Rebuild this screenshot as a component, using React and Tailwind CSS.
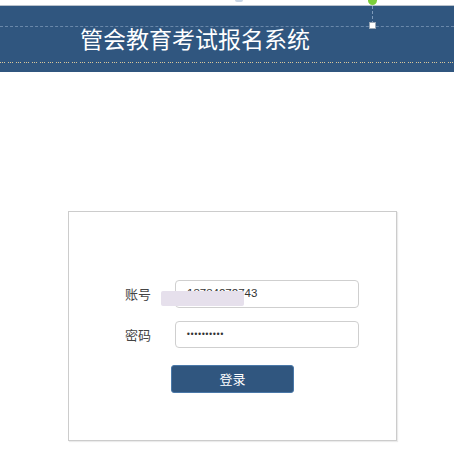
export default function App() {
  const cjk = { fontFamily: '"Noto Sans CJK SC", "Noto Sans", sans-serif' };
  return (
    <div className="relative w-[454px] h-[473px] bg-white overflow-hidden flex flex-col" style={cjk}>
      <div className="absolute left-[235px] top-0 w-[8px] h-[2px] bg-[#c9d6e6] rounded-b" />
      <div className="absolute left-[368px] top-[-4px] w-[9px] h-[9px] rounded-full bg-[#7ccf3b] z-10" />
      <header className="relative mt-[5px] h-[67px] bg-[#30567f] border-t border-[#b9c2cc] flex items-center">
        <div className="absolute left-0 right-0 top-[20px] border-t border-dashed border-[#6a88aa]" />
        <div
          className="absolute left-0 right-0 top-[56px] h-[1px]"
          style={{ backgroundImage: 'repeating-linear-gradient(90deg, #d9c79a 0 1px, transparent 1px 2px, #d9c79a 2px 3px, transparent 3px 4px, #d9c79a 4px 5px, transparent 5px 8px)' }}
        />
        <div className="absolute left-[372px] top-0 h-[18px] border-l border-dashed border-[#7f9bbb]" />
        <div className="absolute left-[369px] top-[16px] w-[7px] h-[7px] bg-white border border-[#9aa7b6]" />
        <h1 className="pl-[80px] pb-[2px] text-[23px] leading-[30px] text-white">管会教育考试报名系统</h1>
      </header>
      <main className="pt-[139px] pl-[68px]">
        <div className="w-[329px] h-[230px] border border-[#cccccc] shadow-[1px_1px_1px_rgba(0,0,0,0.08)] pt-[68px] flex flex-col">
          <div className="grid grid-cols-[82px_184px] gap-x-[24px] gap-y-[13px] items-center">
            <label className="text-right text-[13px] text-[#444]">账号</label>
            <div className="relative h-[28px] border border-[#cfcfcf] rounded-[4px] flex items-center pl-[11px] text-[11.5px] text-[#333]" style={{ fontFamily: '"Liberation Sans", Arial, sans-serif' }}>
              13734272743
              <div className="absolute left-[-15px] top-[10px] w-[83px] h-[15px] bg-[#e6e0ec] rounded-[2px]" />
            </div>
            <label className="text-right text-[13px] text-[#444]">密码</label>
            <div className="h-[27px] border border-[#cfcfcf] rounded-[4px] flex items-center pl-[10px] text-[8px] tracking-[-1px] text-[#333]" style={{ fontFamily: '"DejaVu Sans", sans-serif' }}>
              ••••••••••
            </div>
          </div>
          <div className="pl-[102px] pt-[17px]">
            <button className="w-[123px] h-[28px] bg-[#30567f] rounded-[3px] border border-[#4a78a8] flex items-center justify-center text-[13px] text-white">
              登录
            </button>
          </div>
        </div>
      </main>
    </div>
  );
}
